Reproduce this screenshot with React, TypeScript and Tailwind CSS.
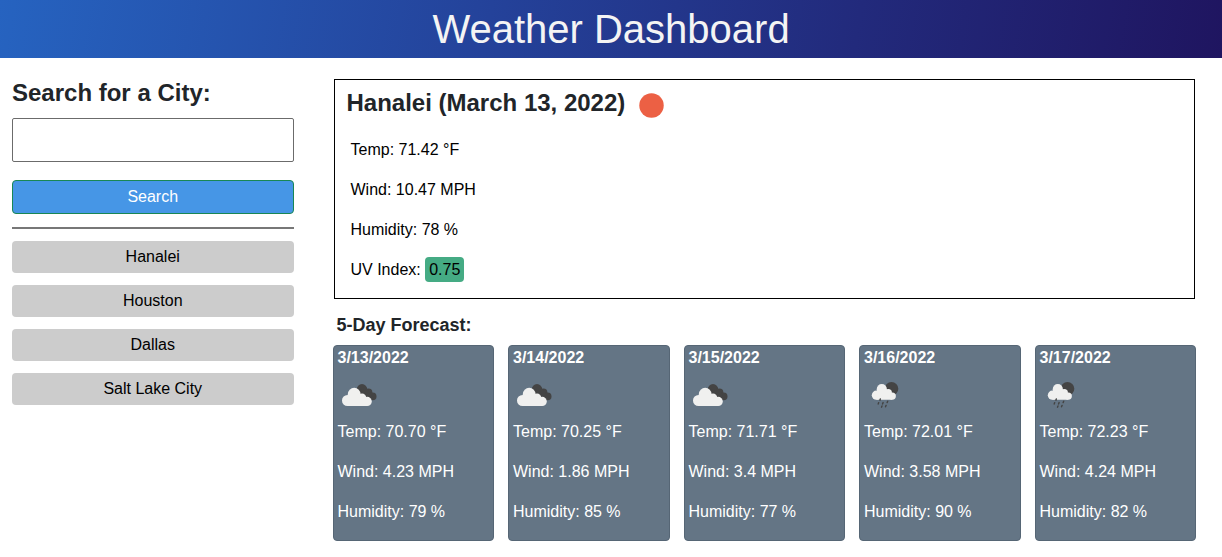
const cities = ["Hanalei", "Houston", "Dallas", "Salt Lake City"];

type Sky = "clouds" | "rain";

type Day = { date: string; sky: Sky; temp: string; wind: string; humidity: string };

const forecast: Day[] = [
  { date: "3/13/2022", sky: "clouds", temp: "70.70", wind: "4.23", humidity: "79" },
  { date: "3/14/2022", sky: "clouds", temp: "70.25", wind: "1.86", humidity: "85" },
  { date: "3/15/2022", sky: "clouds", temp: "71.71", wind: "3.4", humidity: "77" },
  { date: "3/16/2022", sky: "rain", temp: "72.01", wind: "3.58", humidity: "90" },
  { date: "3/17/2022", sky: "rain", temp: "72.23", wind: "4.24", humidity: "82" },
];

function CloudsIcon() {
  return (
    <svg viewBox="0 0 48 50" className="h-[50px] w-12" role="img" aria-label="Broken clouds">
      <g fill="#444444">
        <circle cx="24" cy="19.4" r="5.3" />
        <circle cx="30.4" cy="22.4" r="4" />
        <circle cx="34.7" cy="26.4" r="3.8" />
        <path d="M22 20 L30 19 L36 29 L30 30 Z" />
      </g>
      <g fill="#f0f0ef">
        <circle cx="9.5" cy="30.5" r="5.5" />
        <circle cx="16.2" cy="24.2" r="6.4" />
        <circle cx="24" cy="27.6" r="4.2" />
        <circle cx="29.2" cy="31.4" r="4.6" />
        <path d="M9.5 36 V27 H25 L29.2 31 V36 Z" />
      </g>
    </svg>
  );
}

function RainIcon() {
  return (
    <svg viewBox="0 0 48 50" className="h-[50px] w-12" role="img" aria-label="Rain">
      <circle cx="27.5" cy="18.7" r="6.8" fill="#444444" />
      <g fill="#f0f0ef">
        <circle cx="12.4" cy="25.2" r="4.6" />
        <circle cx="17.8" cy="19.2" r="5.1" />
        <circle cx="24.2" cy="22.6" r="3.7" />
        <circle cx="28.2" cy="26.1" r="3.7" />
        <path d="M12.4 29.8 V22 H25 L28.2 25 V29.8 Z" />
      </g>
      <path
        d="M16.3 29 L15.9 30.2 M14.7 32.6 L14.2 34 M19.1 32.6 L18.5 34 M23.7 31.2 L23.1 32.6 M18 36 L17.5 37.2 M22.1 35.4 L21.5 36.8"
        stroke="#444444"
        strokeWidth="1.4"
        strokeLinecap="round"
      />
    </svg>
  );
}

function ForecastCard({ day }: { day: Day }) {
  return (
    <li className="rounded border border-[#566675] bg-[#647585] px-1 pb-4 text-white">
      <h4 className="font-bold">{day.date}</h4>
      {day.sky === "clouds" ? <CloudsIcon /> : <RainIcon />}
      <div className="flex flex-col gap-4">
        <p>Temp: {day.temp} °F</p>
        <p>Wind: {day.wind} MPH</p>
        <p>Humidity: {day.humidity} %</p>
      </div>
    </li>
  );
}

export default function App() {
  return (
    <div className="font-['Liberation_Sans',Arial,sans-serif] text-base leading-6 text-black">
      <header className="bg-[linear-gradient(100deg,#2663c0,#24429a_40%,#222a7c_70%,#1f1560)] text-center">
        <h1 className="text-[40px] leading-[58px] text-[#f4f4f4]">Weather Dashboard</h1>
      </header>
      <div className="flex">
        <aside className="w-1/4 px-3 pt-5">
          <form onSubmit={(event) => event.preventDefault()}>
            <label htmlFor="city" className="block text-2xl leading-[29px] font-bold text-[#212529]">
              Search for a City:
            </label>
            <input
              id="city"
              type="text"
              className="mt-[11px] block h-11 w-full rounded-[2px] border border-[#6b6b6b] px-2"
            />
            <button
              type="submit"
              className="mt-[18px] block w-full rounded border border-[#198754] bg-[#4696e6] py-1 text-white"
            >
              Search
            </button>
          </form>
          <hr className="mt-[13px] border-t-2 border-[#777777]" />
          <div className="mt-3 flex flex-col gap-3">
            {cities.map((city) => (
              <button key={city} type="button" className="rounded bg-[#cccccc] py-1">
                {city}
              </button>
            ))}
          </div>
        </aside>
        <main className="w-3/4 pt-[21px] pr-[26px] pl-[27px]">
          <section className="mx-px border border-black px-3 pb-4">
            <div className="flex items-center gap-[14px] pt-2 pb-5">
              <h2 className="text-2xl leading-[30px] font-bold text-[#212529]">Hanalei (March 13, 2022)</h2>
              <svg viewBox="0 0 26 26" className="mt-1 size-[25px]" role="img" aria-label="Clear sky">
                <circle cx="13" cy="13" r="12.7" fill="#ec6044" />
              </svg>
            </div>
            <div className="flex flex-col gap-4 px-1">
              <p>Temp: 71.42 °F</p>
              <p>Wind: 10.47 MPH</p>
              <p>Humidity: 78 %</p>
              <p>
                UV Index: <span className="rounded bg-[#45ab84] px-1 py-1">0.75</span>
              </p>
            </div>
          </section>
          <h3 className="mt-4 px-1 text-lg leading-5 font-bold text-[#212529]">5-Day Forecast:</h3>
          <ul className="mt-[10px] grid grid-cols-5 gap-[14px]">
            {forecast.map((day) => (
              <ForecastCard key={day.date} day={day} />
            ))}
          </ul>
        </main>
      </div>
    </div>
  );
}
